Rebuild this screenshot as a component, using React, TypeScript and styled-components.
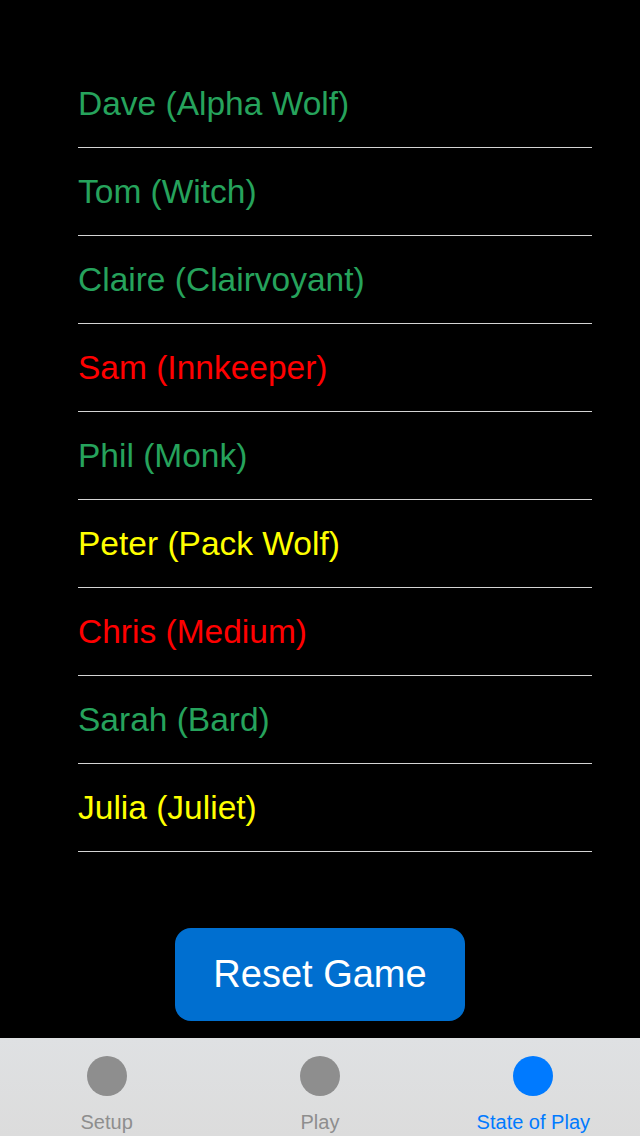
import styled, { createGlobalStyle } from "styled-components"

type Side = "village" | "killed" | "wolf"

const players: { name: string; side: Side }[] = [
    { name: "Dave (Alpha Wolf)", side: "village" },
    { name: "Tom (Witch)", side: "village" },
    { name: "Claire (Clairvoyant)", side: "village" },
    { name: "Sam (Innkeeper)", side: "killed" },
    { name: "Phil (Monk)", side: "village" },
    { name: "Peter (Pack Wolf)", side: "wolf" },
    { name: "Chris (Medium)", side: "killed" },
    { name: "Sarah (Bard)", side: "village" },
    { name: "Julia (Juliet)", side: "wolf" },
]

const colours: Record<Side, string> = {
    village: "#26a35c",
    killed: "#ff0000",
    wolf: "#ffff00",
}

const tabs = [
    { label: "Setup", active: false },
    { label: "Play", active: false },
    { label: "State of Play", active: true },
]

function App() {
    return (
        <>
            <Global />
            <Screen>
                <PlayerList>
                    {players.map((p) => (
                        <PlayerRow key={p.name}>
                            <PlayerName $side={p.side}>{p.name}</PlayerName>
                        </PlayerRow>
                    ))}
                </PlayerList>
                <ButtonArea>
                    <ResetButton>Reset Game</ResetButton>
                </ButtonArea>
                <TabBar>
                    {tabs.map((t) => (
                        <Tab key={t.label} $active={t.active}>
                            <TabDot $active={t.active} />
                            <TabLabel>{t.label}</TabLabel>
                        </Tab>
                    ))}
                </TabBar>
            </Screen>
        </>
    )
}

export default App

const Global = createGlobalStyle`
    html, body {
        margin: 0;
        padding: 0;
        background: #000;
    }
    body {
        font-family: "Liberation Sans", Arial, sans-serif;
    }
`

const Screen = styled.div`
    width: 640px;
    height: 1136px;
    display: flex;
    flex-direction: column;
    background: #000;
    overflow: hidden;
`

const PlayerList = styled.ul`
    list-style: none;
    margin: 0;
    padding: 60px 48px 0 78px;
`

const PlayerRow = styled.li`
    height: 87px;
    display: flex;
    align-items: center;
    border-bottom: 1px solid #d4d4d4;
`

const PlayerName = styled.span<{ $side: Side }>`
    color: ${(p) => colours[p.$side]};
    font-size: 33.5px;
    margin-top: 1px;
`

const ButtonArea = styled.div`
    flex: 1;
    display: flex;
    justify-content: center;
    padding-top: 76px;
`

const ResetButton = styled.button`
    width: 290px;
    height: 93px;
    border: none;
    border-radius: 16px;
    background: #006fd0;
    color: #fff;
    font-family: "Liberation Sans", Arial, sans-serif;
    font-size: 38px;
    padding: 0;
`

const TabBar = styled.nav`
    height: 98px;
    display: grid;
    grid-template-columns: repeat(3, 1fr);
    background: linear-gradient(180deg, #dfe1e3 0%, #dcdcdc 100%);
`

const Tab = styled.div<{ $active: boolean }>`
    display: flex;
    flex-direction: column;
    align-items: center;
    padding-top: 18px;
    color: ${(p) => (p.$active ? "#007aff" : "#8e8e8e")};
`

const TabDot = styled.div<{ $active: boolean }>`
    width: 40px;
    height: 40px;
    border-radius: 50%;
    background: ${(p) => (p.$active ? "#007aff" : "#8e8e8e")};
`

const TabLabel = styled.span`
    margin-top: 15px;
    font-size: 20px;
`
